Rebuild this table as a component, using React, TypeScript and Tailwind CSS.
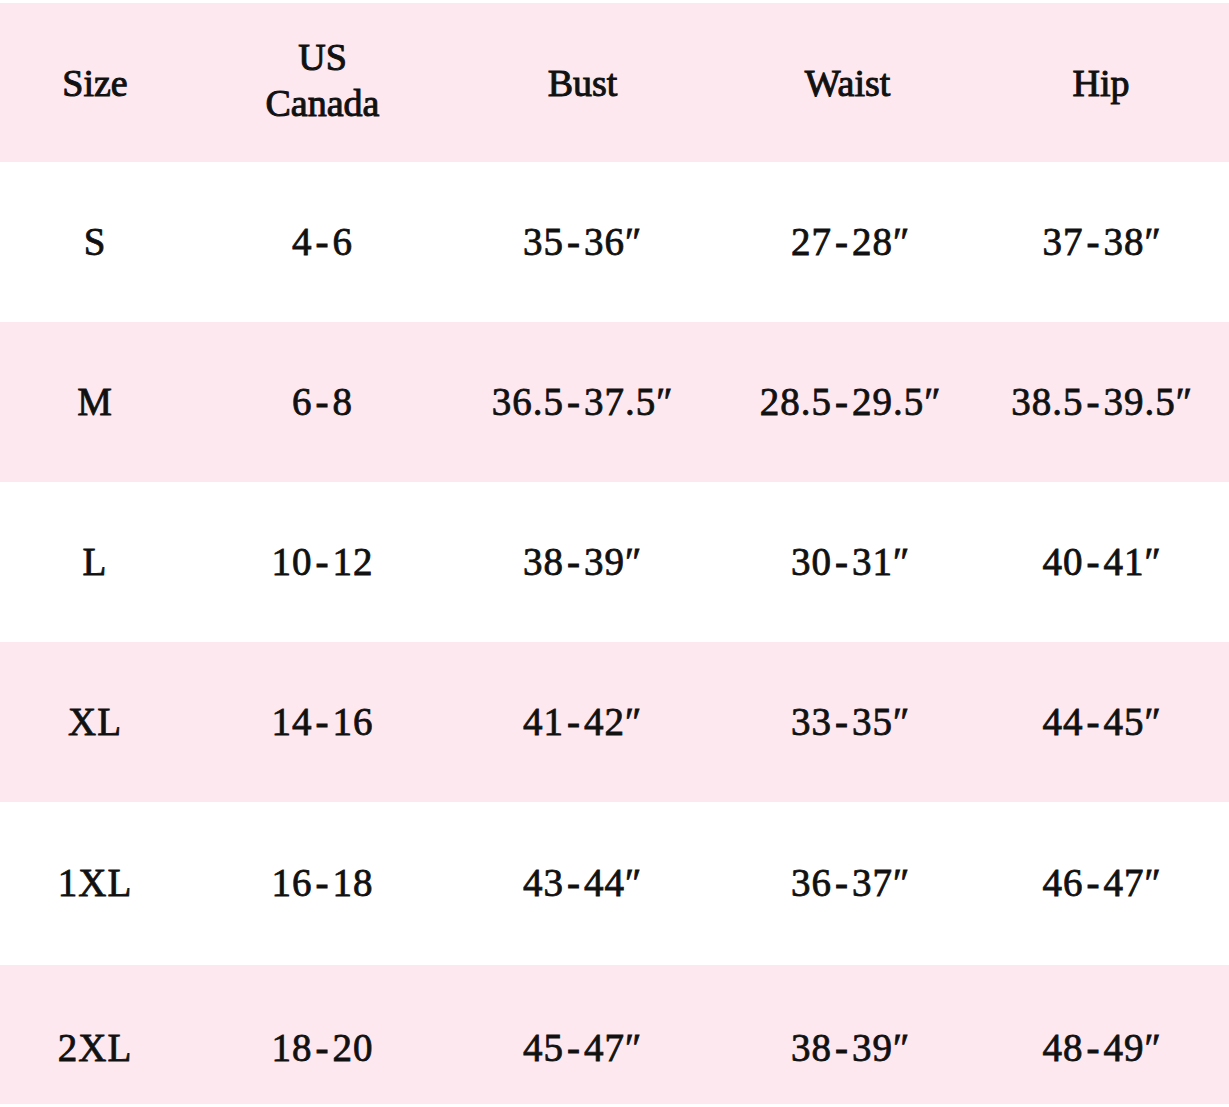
import React from "react";

const rows: string[][] = [
  ["S", "4-6", "35-36\u2033", "27-28\u2033", "37-38\u2033"],
  ["M", "6-8", "36.5-37.5\u2033", "28.5-29.5\u2033", "38.5-39.5\u2033"],
  ["L", "10-12", "38-39\u2033", "30-31\u2033", "40-41\u2033"],
  ["XL", "14-16", "41-42\u2033", "33-35\u2033", "44-45\u2033"],
  ["1XL", "16-18", "43-44\u2033", "36-37\u2033", "46-47\u2033"],
  ["2XL", "18-20", "45-47\u2033", "38-39\u2033", "48-49\u2033"],
];

const heights = [
  "h-[160px]",
  "h-[160px]",
  "h-[160px]",
  "h-[160px]",
  "h-[163px]",
  "h-[139px] pt-[28px]",
];

function fmt(v: string) {
  const parts = v.split("-");
  if (parts.length === 1) return v;
  return (
    <>
      {parts[0]}
      <span className="mx-[3px]">-</span>
      {parts[1]}
    </>
  );
}

export default function App() {
  const grid = "grid grid-cols-[190px_265px_255px_275px_1fr] items-center";
  return (
    <div className="w-[1229px] h-[1107px] bg-white pt-[3px] font-['Liberation_Serif',serif] text-[#111] [-webkit-text-stroke:0.8px_#111]">
      <div className={`${grid} h-[159px] bg-[#fde8ef] text-[38px] leading-[46px] [-webkit-text-stroke:1px_#111]`}>
        <div className="text-center">Size</div>
        <div className="text-center pb-[6px]">
          US
          <br />
          Canada
        </div>
        <div className="text-center">Bust</div>
        <div className="text-center">Waist</div>
        <div className="text-center pr-[12px]">Hip</div>
      </div>
      {rows.map((r, i) => (
        <div
          key={r[0]}
          className={`${grid} ${heights[i]} ${i % 2 === 1 ? "bg-[#fde8ef]" : "bg-white"} text-[39px] tracking-[1px]`}
        >
          <div className="text-center">{r[0]}</div>
          <div className="text-center">{fmt(r[1])}</div>
          <div className="text-center">{fmt(r[2])}</div>
          <div className="text-center pl-[6px]">{fmt(r[3])}</div>
          <div className="text-center pr-[10px]">{fmt(r[4])}</div>
        </div>
      ))}
    </div>
  );
}
